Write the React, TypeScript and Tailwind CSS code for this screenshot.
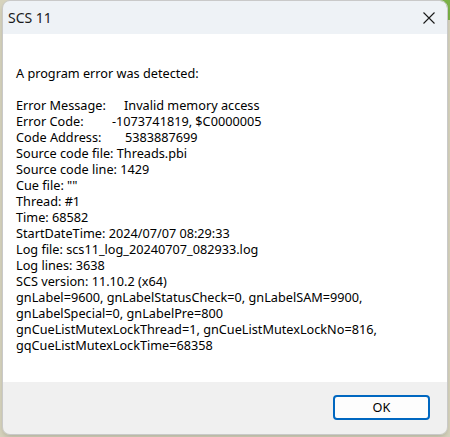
import React from "react";

const lines = [
  "Source code file: Threads.pbi",
  "Source code line: 1429",
  'Cue file: ""',
  "Thread: #1",
  "Time: 68582",
  "StartDateTime: 2024/07/07 08:29:33",
  "Log file: scs11_log_20240707_082933.log",
  "Log lines: 3638",
  "SCS version: 11.10.2 (x64)",
  "gnLabel=9600, gnLabelStatusCheck=0, gnLabelSAM=9900,",
  "gnLabelSpecial=0, gnLabelPre=800",
  "gnCueListMutexLockThread=1, gnCueListMutexLockNo=816,",
  "gqCueListMutexLockTime=68358",
];

export default function App() {
  return (
    <div
      className="w-[450px] h-[437px] bg-[#d6d3bd] relative overflow-hidden"
      style={{ fontFamily: '"Segoe UI", "Noto Sans", sans-serif' }}
    >
      <div className="absolute top-0 right-0 w-[60px] h-[20px] bg-[#7bb247]" />
      <div className="absolute top-0 left-[30px] w-[330px] h-[6px] bg-[#a9adb2]" />
      <div className="absolute left-[2px] top-0 w-[446px] h-[435px] rounded-[8px] border border-[#c9c9c9] overflow-hidden flex flex-col shadow-md">
        <div className="h-[33px] bg-[#eef2f6] flex items-center justify-between pl-[5px] pr-[12px] shrink-0">
          <span className="text-[14px] text-[#1a1a1a]">SCS 11</span>
          <svg width="12" height="12" viewBox="0 0 12 12" className="mt-[1px]">
            <path d="M0.5 0.5 L11.5 11.5 M11.5 0.5 L0.5 11.5" stroke="#1a1a1a" strokeWidth="1.1" />
          </svg>
        </div>
        <div className="bg-white flex-1 pl-[13px] pt-[31px] text-[12.7px] leading-[16px] text-black whitespace-pre">
          <div>A program error was detected:</div>
          <div className="h-[16px]" />
          <div className="flex">
            <span className="w-[108px]">Error Message:</span>
            <span>Invalid memory access</span>
          </div>
          <div className="flex">
            <span className="w-[96px]">Error Code:</span>
            <span>-1073741819, $C0000005</span>
          </div>
          <div className="flex">
            <span className="w-[109px]">Code Address:</span>
            <span>5383887699</span>
          </div>
          {lines.map((l) => (
            <div key={l}>{l}</div>
          ))}
        </div>
        <div className="h-[52px] bg-[#f0f0f0] flex items-start justify-end pr-[17px] pt-[13px] shrink-0">
          <button className="w-[97px] h-[25px] rounded-[4px] border-2 border-[#0067c0] bg-[#fdfdfd] text-[12.7px] text-black flex items-center justify-center">
            OK
          </button>
        </div>
      </div>
    </div>
  );
}
